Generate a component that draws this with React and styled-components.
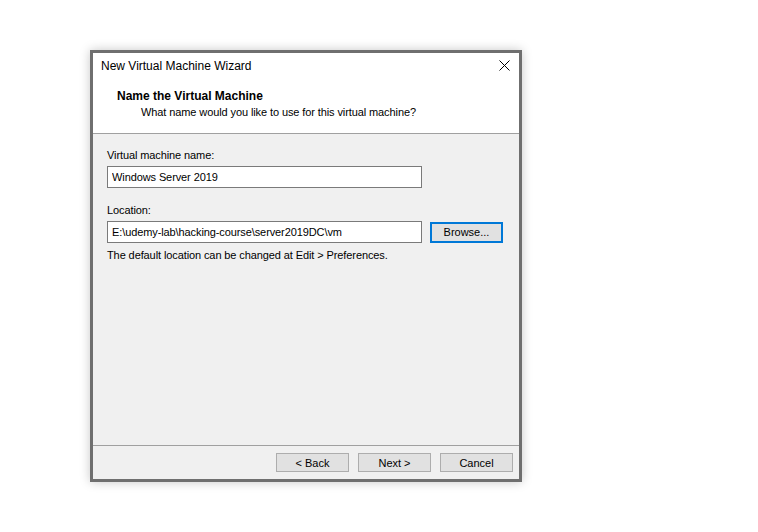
import React from "react"
import styled, { createGlobalStyle } from "styled-components"

const GlobalStyle = createGlobalStyle`
  html, body {
    margin: 0;
    padding: 0;
    background: #fff;
  }
  body {
    font-family: "Liberation Sans", Arial, sans-serif;
    font-size: 11px;
    letter-spacing: -0.1px;
    color: #000;
  }
`

const Page = styled.div`
  width: 758px;
  height: 532px;
  padding: 50px 0 0 90px;
  box-sizing: border-box;
`

const Window = styled.div`
  width: 432px;
  height: 432px;
  box-sizing: border-box;
  border: 3px solid #6f6f6f;
  background: #f0f0f0;
  display: flex;
  flex-direction: column;
  box-shadow: 0 0 10px rgba(0, 0, 0, 0.22);
`

const TitleBar = styled.div`
  height: 28px;
  background: #fff;
  display: flex;
  align-items: flex-start;
  justify-content: space-between;
  padding: 5px 8px 0 8px;
  box-sizing: border-box;
`

const Title = styled.span`
  font-size: 12px;
  letter-spacing: 0;
  line-height: 16px;
`

const CloseButton = styled.button`
  width: 16px;
  height: 16px;
  border: none;
  background: transparent;
  padding: 0;
  display: flex;
  align-items: center;
  justify-content: center;
  margin: -1px -1px 0 0;
`

const Header = styled.div`
  height: 53px;
  background: #fff;
  padding: 7px 0 0 24px;
  box-sizing: border-box;
  border-bottom: 1px solid #a0a0a0;
`

const HeaderTitle = styled.div`
  font-size: 12px;
  letter-spacing: 0;
  font-weight: bold;
  line-height: 16px;
`

const HeaderSub = styled.div`
  line-height: 16px;
  padding-left: 24px;
`

const Body = styled.div`
  flex: 1;
  padding: 13px 14px 0 14px;
  border-bottom: 1px solid #a0a0a0;
`

const Label = styled.div`
  line-height: 16px;
  margin-top: ${p => p.$gap || 0}px;
`

const Row = styled.div`
  display: flex;
  align-items: center;
  gap: 8px;
  margin-top: 3px;
`

const TextBox = styled.input`
  width: 315px;
  height: 22px;
  box-sizing: border-box;
  border: 1px solid #7a7a7a;
  background: #fff;
  font-family: inherit;
  font-size: 11px;
  letter-spacing: -0.1px;
  color: #000;
  padding: 0 4px;
  outline: none;
`

const Button = styled.button`
  width: 73px;
  height: ${p => (p.$focused ? 21 : 19)}px;
  box-sizing: border-box;
  border: ${p => (p.$focused ? "2px solid #0078d7" : "1px solid #adadad")};
  background: #e1e1e1;
  font-family: inherit;
  font-size: 11px;
  color: #000;
  padding: 0;
`

const Footer = styled.div`
  height: 33px;
  display: flex;
  justify-content: flex-end;
  align-items: flex-start;
  gap: 9px;
  padding: 7px 6px 0 0;
  box-sizing: border-box;
`

export default function App() {
  return (
    <Page>
      <GlobalStyle />
      <Window>
        <TitleBar>
          <Title>New Virtual Machine Wizard</Title>
          <CloseButton aria-label="Close">
            <svg width="11" height="11" viewBox="0 0 11 11">
              <path d="M0.5 0.5 L10.5 10.5 M10.5 0.5 L0.5 10.5" stroke="#000" strokeWidth="1" />
            </svg>
          </CloseButton>
        </TitleBar>
        <Header>
          <HeaderTitle>Name the Virtual Machine</HeaderTitle>
          <HeaderSub>What name would you like to use for this virtual machine?</HeaderSub>
        </Header>
        <Body>
          <Label>Virtual machine name:</Label>
          <Row>
            <TextBox defaultValue="Windows Server 2019" />
          </Row>
          <Label $gap={14}>Location:</Label>
          <Row>
            <TextBox defaultValue="E:\udemy-lab\hacking-course\server2019DC\vm" />
            <Button $focused>Browse...</Button>
          </Row>
          <Label $gap={4}>The default location can be changed at Edit &gt; Preferences.</Label>
        </Body>
        <Footer>
          <Button>&lt; Back</Button>
          <Button>Next &gt;</Button>
          <Button>Cancel</Button>
        </Footer>
      </Window>
    </Page>
  )
}
